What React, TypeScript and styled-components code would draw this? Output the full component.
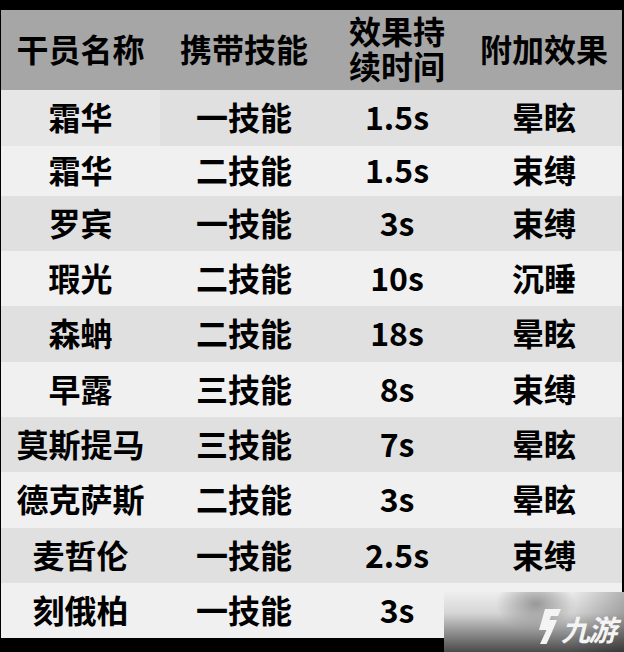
import styled, { createGlobalStyle } from "styled-components";

const ROWS = [
  { name: "霜华", skill: "一技能", time: "1.5s", effect: "晕眩", h: 56 },
  { name: "霜华", skill: "二技能", time: "1.5s", effect: "束缚", h: 50 },
  { name: "罗宾", skill: "一技能", time: "3s", effect: "束缚", h: 55 },
  { name: "瑕光", skill: "二技能", time: "10s", effect: "沉睡", h: 55 },
  { name: "森蚺", skill: "二技能", time: "18s", effect: "晕眩", h: 56 },
  { name: "早露", skill: "三技能", time: "8s", effect: "束缚", h: 55 },
  { name: "莫斯提马", skill: "三技能", time: "7s", effect: "晕眩", h: 55 },
  { name: "德克萨斯", skill: "二技能", time: "3s", effect: "晕眩", h: 56 },
  { name: "麦哲伦", skill: "一技能", time: "2.5s", effect: "束缚", h: 55 },
  { name: "刻俄柏", skill: "一技能", time: "3s", effect: "", h: 55 },
];

const COLS = "159px 168px 138px 156px";

const GlobalStyle = createGlobalStyle`
  html, body {
    margin: 0;
    padding: 0;
    background: #000;
  }
  body {
    font-family: "Noto Sans CJK SC", "Noto Sans", sans-serif;
  }
`;

const Frame = styled.div`
  position: relative;
  width: 624px;
  height: 652px;
  padding: 10px 2px 14px 1px;
  box-sizing: border-box;
  overflow: hidden;
  background: #000;
`;

const Table = styled.div`
  display: flex;
  flex-direction: column;
  width: 621px;
`;

const HeaderRow = styled.div`
  display: grid;
  grid-template-columns: ${COLS};
  height: 80px;
  background: #a6a6a6;
`;

const HeadCell = styled.div`
  display: flex;
  align-items: center;
  justify-content: center;
  text-align: center;
  font-size: 32px;
  font-weight: 700;
  line-height: 35px;
  color: #000;
  white-space: pre-line;
  padding-bottom: 4px;
`;

const Row = styled.div<{ $odd: boolean }>`
  display: grid;
  grid-template-columns: ${COLS};
  background: ${(p) => (p.$odd ? "#e0e0e0" : "#f0f0f0")};
`;

const Cell = styled.div<{ $light?: boolean }>`
  display: flex;
  align-items: center;
  justify-content: center;
  font-size: 32px;
  font-weight: 700;
  line-height: 1;
  color: #000;
  padding-bottom: 4px;
  background: ${(p) => (p.$light ? "#e6e6e6" : "transparent")};
`;

const Watermark = styled.div`
  position: absolute;
  left: 444px;
  top: 592px;
  width: 180px;
  height: 60px;
  display: flex;
  align-items: flex-end;
  justify-content: flex-end;
  gap: 3px;
  padding: 0 6px 10px 0;
  box-sizing: border-box;
  background:
    radial-gradient(ellipse 40px 28px at 92px 12px, rgba(140, 140, 140, 0.85), rgba(140, 140, 140, 0) 100%),
    linear-gradient(to right, rgba(0, 0, 0, 0) 70%, rgba(0, 0, 0, 0.25) 100%),
    linear-gradient(to bottom, #eeeeee 0%, #d6d6d6 35%, #8a8a8a 70%, #4a4a4a 100%);
`;

const LogoText = styled.span`
  font-family: "Noto Sans CJK SC", sans-serif;
  font-size: 29px;
  font-weight: 700;
  color: #f4f4f4;
  letter-spacing: -2px;
  transform: skewX(-14deg);
  line-height: 1;
  margin-bottom: -1px;
`;

const LogoMark = () => (
  <svg width="24" height="35" viewBox="0 0 24 35" style={{ marginBottom: -2 }}>
    <path
      d="M8 0 H24 L21 7 H14 L12.5 11 H20 L15 23 L9.5 35 H3 L9.5 21 H2 Z"
      fill="#f4f4f4"
    />
  </svg>
);

export default function App() {
  return (
    <>
      <GlobalStyle />
      <Frame>
        <Table>
          <HeaderRow>
            <HeadCell>干员名称</HeadCell>
            <HeadCell>携带技能</HeadCell>
            <HeadCell>{"效果持\n续时间"}</HeadCell>
            <HeadCell>附加效果</HeadCell>
          </HeaderRow>
          {ROWS.map((r, i) => (
            <Row key={i} $odd={i % 2 === 0} style={{ height: r.h }}>
              <Cell $light={i === 0}>{r.name}</Cell>
              <Cell>{r.skill}</Cell>
              <Cell>{r.time}</Cell>
              <Cell>{r.effect}</Cell>
            </Row>
          ))}
        </Table>
        <Watermark>
          <LogoMark />
          <LogoText>九游</LogoText>
        </Watermark>
      </Frame>
    </>
  );
}
